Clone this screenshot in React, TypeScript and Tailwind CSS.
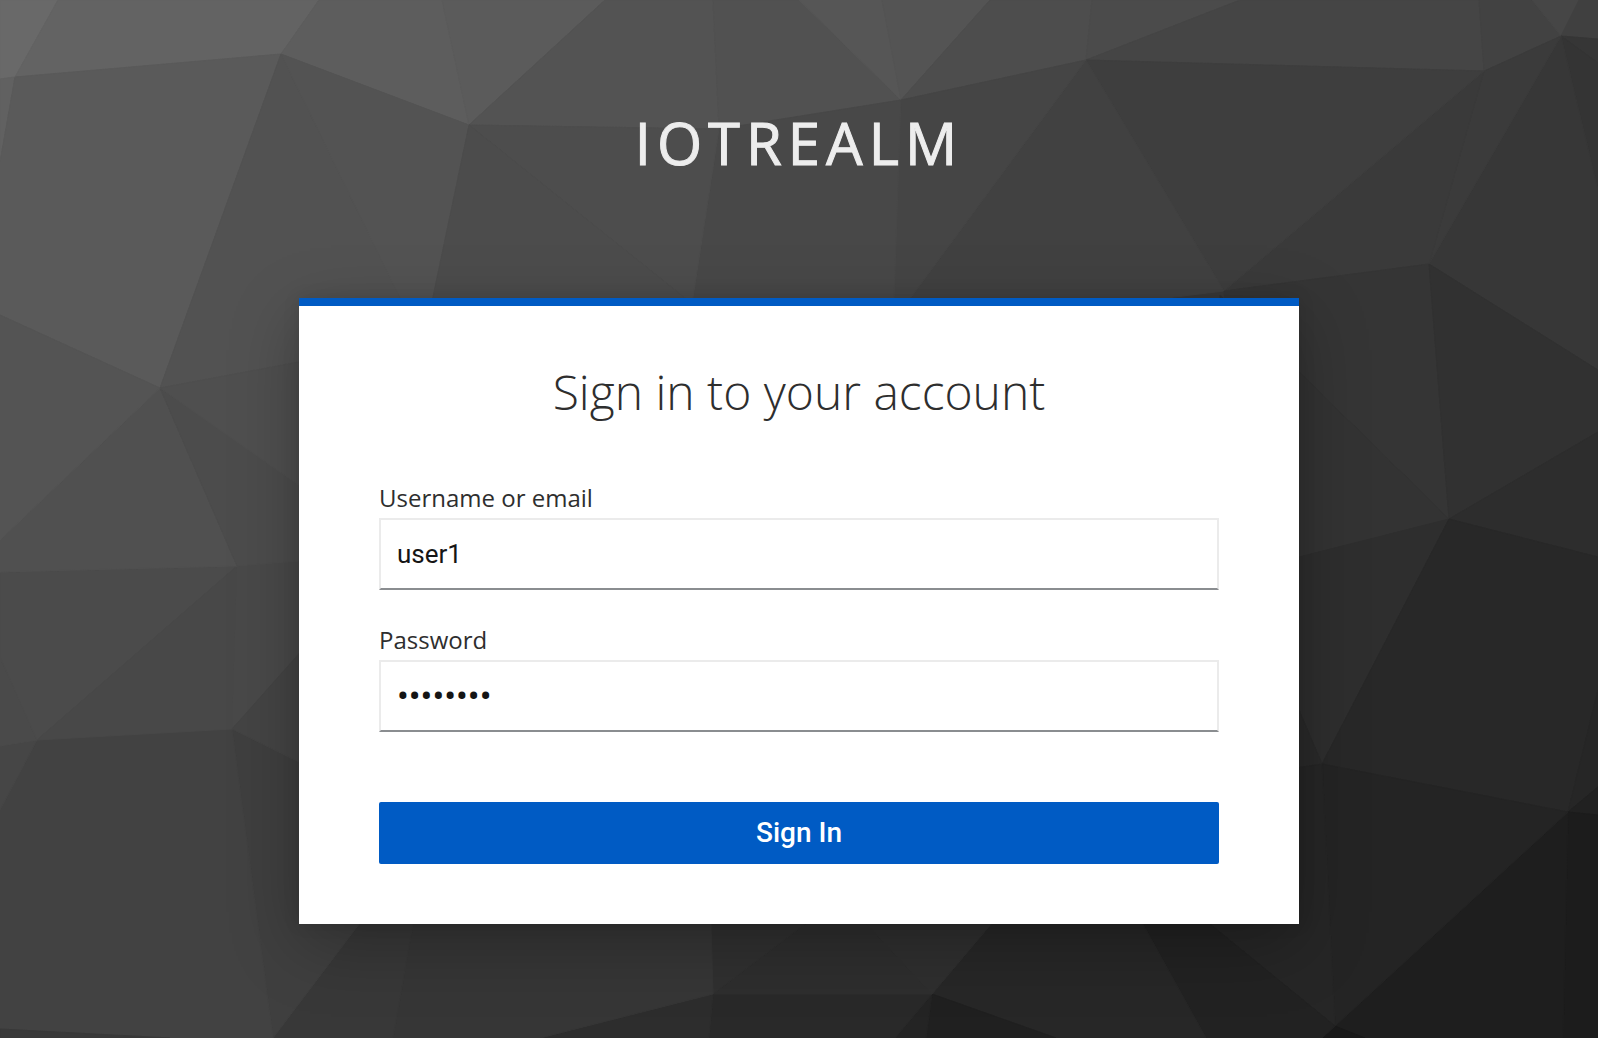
const facets: [string, string][] = [
  ['#696969', '0,0 58,0 15,77 0,79'],
  ['#636363', '58,0 319,0 281,54 15,77'],
  ['#616161', '0,79 15,77 0,162'],
  ['#5a5a5a', '0,162 15,77 281,54 160,388 0,315'],
  ['#5d5d5d', '319,0 442,0 469,125 281,54'],
  ['#5b5b5b', '442,0 605,0 469,125'],
  ['#525252', '281,54 400,298 400,343 160,388'],
  ['#535353', '281,54 469,125 424,340 400,298'],
  ['#535353', '605,0 713,0 719,129 469,125'],
  ['#515151', '713,0 799,0 901,100 719,129'],
  ['#565656', '799,0 882,0 901,100'],
  ['#545454', '882,0 990,0 901,100'],
  ['#4d4d4d', '990,0 1092,0 1086,60 901,100'],
  ['#4b4b4b', '1092,0 1240,0 1086,60'],
  ['#454545', '1240,0 1479,0 1484,71 1086,60'],
  ['#424242', '1479,0 1532,0 1561,36 1484,71'],
  ['#464646', '1532,0 1579,0 1561,36'],
  ['#404040', '1579,0 1598,0 1598,39 1561,36'],
  ['#363636', '1561,36 1598,39 1598,63'],
  ['#343434', '1561,36 1598,63 1598,190'],
  ['#373737', '1561,36 1598,190 1598,370 1429,264'],
  ['#3b3b3b', '1484,71 1561,36 1429,264'],
  ['#3a3a3a', '1224,291 1484,71 1429,264'],
  ['#3e3e3e', '1086,60 1484,71 1224,291'],
  ['#414141', '1086,60 1224,291 1166,298 1100,320 890,326'],
  ['#454545', '901,100 1086,60 890,326'],
  ['#484848', '719,129 901,100 893,330 688,330'],
  ['#4d4d4d', '469,125 719,129 688,330 685,298'],
  ['#4c4c4c', '469,125 685,298 720,326 424,340'],
  ['#353535', '1224,291 1429,264 1449,519 1299,372 1226,320'],
  ['#313131', '1429,264 1598,370 1598,432 1449,519'],
  ['#2d2d2d', '1449,519 1598,432 1598,557'],
  ['#333333', '1220,295 1299,372 1449,519 1299,557 1220,580'],
  ['#2e2e2e', '1220,580 1299,557 1449,519 1322,764 1299,710'],
  ['#2a2a2a', '1299,710 1322,764 1220,780'],
  ['#282828', '1449,519 1598,557 1598,690 1568,812 1322,764'],
  ['#262626', '1598,690 1598,787 1568,812'],
  ['#212121', '1598,787 1598,815 1568,812'],
  ['#1c1c1c', '1568,812 1598,815 1598,1038 1563,1038'],
  ['#1e1e1e', '1568,812 1563,1038 1365,1038 1335,1026'],
  ['#242424', '1322,764 1568,812 1335,1026'],
  ['#191919', '1335,1026 1365,1038 1322,1038'],
  ['#262626', '1220,780 1322,764 1335,1026 1210,924'],
  ['#222222', '1143,924 1100,850 1210,924 1335,1026 1322,1038 1206,1038'],
  ['#272727', '932,994 1020,890 1124,890 1206,1038 1056,1038'],
  ['#202020', '932,994 1056,1038 926,1038'],
  ['#242424', '932,994 926,1038 895,1038'],
  ['#292929', '713,994 932,994 895,1038 709,1038'],
  ['#2d2d2d', '713,994 540,1038 709,1038'],
  ['#2e2e2e', '713,994 850,890 835,890 932,994'],
  ['#2f2f2f', '835,890 1020,890 932,994'],
  ['#303030', '713,994 710,890 850,890'],
  ['#363636', '419,890 710,890 713,994 540,1038 393,1038'],
  ['#383838', '385,890 419,890 393,1038 273,1038'],
  ['#3f3f3f', '232,729 299,762 400,810 400,870 273,1038'],
  ['#424242', '37,740 232,729 273,1038 170,1038 0,1029 0,810'],
  ['#393939', '0,1029 170,1038 0,1038'],
  ['#464646', '37,740 0,746 0,810'],
  ['#4a4a4a', '0,657 37,740 0,746'],
  ['#4b4b4b', '0,572 237,566 37,740 0,657'],
  ['#484848', '237,566 232,729 37,740'],
  ['#494949', '237,566 400,548 400,550 232,729'],
  ['#444444', '232,729 400,540 400,812'],
  ['#505050', '160,388 237,566 0,572 0,540'],
  ['#545454', '0,315 160,388 0,540'],
  ['#4c4c4c', '160,388 400,553 237,566'],
  ['#4f4f4f', '160,388 400,343 400,556'],
]

function Backdrop() {
  return (
    <svg
      aria-hidden="true"
      className="absolute inset-0 -z-10 h-full w-full"
      viewBox="0 0 1598 1038"
      preserveAspectRatio="xMidYMid slice"
    >
      {facets.map(([fill, points]) => (
        <polygon key={points} points={points} fill={fill} stroke={fill} strokeWidth="1" strokeLinejoin="round" />
      ))}
    </svg>
  )
}

type FieldProps = { id: string; label: string; type: 'text' | 'password'; value: string }

function Field({ id, label, type, value }: FieldProps) {
  const size = type === 'password' ? 'text-[35px]' : 'text-[26px]'
  return (
    <div className="flex flex-col gap-0.5">
      <label htmlFor={id} className="text-2xl leading-9">
        {label}
      </label>
      <input
        id={id}
        name={id}
        type={type}
        defaultValue={value}
        autoComplete="off"
        className={`h-18 w-full border-2 border-[#ebebeb] border-b-[#8a8d90] bg-white px-4 font-[Roboto,sans-serif] text-[#151515] outline-none ${size}`}
      />
    </div>
  )
}

export default function App() {
  return (
    <div className="relative isolate flex min-h-screen flex-col items-center overflow-hidden bg-[#393939] font-['Open_Sans',sans-serif] text-[#2e2e2e]">
      <Backdrop />
      <header className="pt-[107px] pb-[119px]">
        <h1 className="text-center text-[58px] leading-[72px] tracking-[6px] text-[#ededed] uppercase [-webkit-text-stroke:1px_#ededed]">
          iotrealm
        </h1>
      </header>
      <main className="w-full max-w-[1000px] border-t-8 border-[#005bc4] bg-white px-20 pt-14 pb-[60px] shadow-[0_20px_64px_rgba(0,0,0,0.26),0_0_16px_rgba(0,0,0,0.1)]">
        <h2 className="text-center text-5xl leading-[60px] font-light">Sign in to your account</h2>
        <form className="mt-[58px]" onSubmit={(event) => event.preventDefault()}>
          <div className="flex flex-col gap-8">
            <Field id="username" label="Username or email" type="text" value="user1" />
            <Field id="password" label="Password" type="password" value="password" />
          </div>
          <button
            type="submit"
            className="mt-[70px] h-[62px] w-full rounded-xs bg-[#005bc4] font-[Roboto,sans-serif] text-[28px] font-medium text-white"
          >
            Sign In
          </button>
        </form>
      </main>
    </div>
  )
}
